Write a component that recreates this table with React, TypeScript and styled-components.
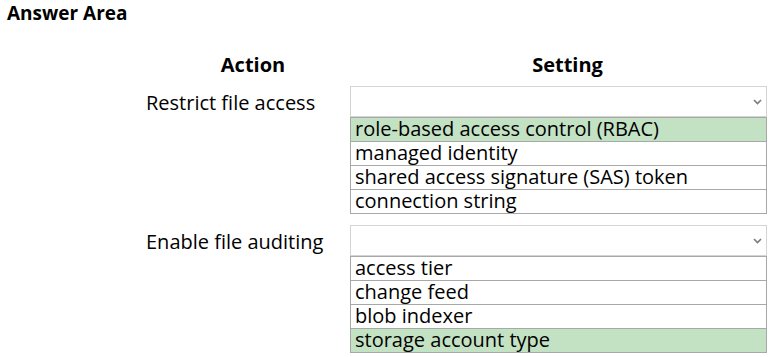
import React from "react";
import styled, { createGlobalStyle } from "styled-components";

const Global = createGlobalStyle`
  html, body { margin: 0; padding: 0; background: #fff; }
  body { font-family: "Open Sans", "Noto Sans", sans-serif; color: #000; }
`;

const Page = styled.div`
  width: 770px;
  height: 357px;
  padding: 2px 0 0 7px;
  box-sizing: border-box;
`;

const Title = styled.h1`
  margin: 0;
  font-size: 19px;
  font-weight: 700;
  line-height: 22px;
`;

const Table = styled.div`
  display: grid;
  grid-template-columns: 204px 417px;
  margin: 28px 0 0 139px;
`;

const Head = styled.div<{ $shift?: number }>`
  font-size: 20px;
  font-weight: 700;
  line-height: 26px;
  text-align: center;
  transform: translateX(${(p) => p.$shift ?? 0}px);
`;

const Label = styled.div<{ $gap: number }>`
  font-size: 20px;
  line-height: 24px;
  padding-top: 5px;
  margin-top: ${(p) => p.$gap}px;
  white-space: nowrap;
`;

const Dropdown = styled.div<{ $gap: number }>`
  display: flex;
  flex-direction: column;
  margin-top: ${(p) => p.$gap}px;
`;

const Select = styled.div`
  height: 31px;
  border: 1px solid #d4d4d4;
  box-sizing: border-box;
  display: flex;
  align-items: center;
  justify-content: flex-end;
  padding-right: 4px;
`;

const Options = styled.div`
  border: 1px solid #a8a8a8;
  border-top: none;
`;

const Option = styled.div<{ $on?: boolean }>`
  height: 24px;
  box-sizing: border-box;
  border-top: 1px solid #a8a8a8;
  background: ${(p) => (p.$on ? "#c3e1c3" : "#fff")};
  font-size: 20px;
  line-height: 22px;
  padding-left: 4px;
  white-space: nowrap;
`;

const Chevron = () => (
  <svg width="9" height="6" viewBox="0 0 9 6">
    <path d="M1 1 L4.5 4.5 L8 1" fill="none" stroke="#7a7a7a" strokeWidth="1.6" />
  </svg>
);

const rows = [
  {
    action: "Restrict file access",
    options: [
      "role-based access control (RBAC)",
      "managed identity",
      "shared access signature (SAS) token",
      "connection string",
    ],
    picked: 0,
    gap: 8,
  },
  {
    action: "Enable file auditing",
    options: ["access tier", "change feed", "blob indexer", "storage account type"],
    picked: 3,
    gap: 11,
  },
];

export default function App() {
  return (
    <Page>
      <Global />
      <Title>Answer Area</Title>
      <Table>
        <Head $shift={5}>Action</Head>
        <Head $shift={9}>Setting</Head>
        {rows.map((r) => (
          <React.Fragment key={r.action}>
            <Label $gap={r.gap}>{r.action}</Label>
            <Dropdown $gap={r.gap}>
              <Select>
                <Chevron />
              </Select>
              <Options>
                {r.options.map((o, j) => (
                  <Option key={o} $on={j === r.picked}>
                    {o}
                  </Option>
                ))}
              </Options>
            </Dropdown>
          </React.Fragment>
        ))}
      </Table>
    </Page>
  );
}
